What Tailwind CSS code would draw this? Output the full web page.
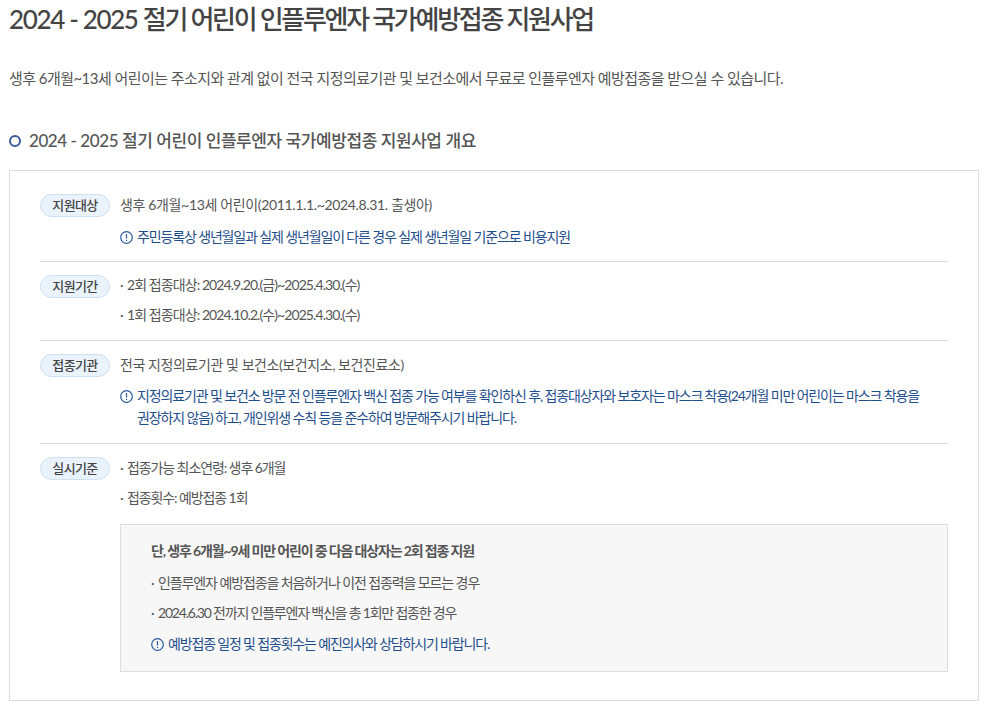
<!DOCTYPE html>
<html lang="ko">
<head>
    <meta charset="UTF-8">
    <title>2024 - 2025 절기 어린이 인플루엔자 국가예방접종 지원사업</title>
    <script src="https://cdn.jsdelivr.net/npm/@tailwindcss/browser@4"></script>
</head>
<body class="bg-white font-['Lato','Noto_Sans_CJK_KR',sans-serif] text-[#555] overflow-hidden">
<div class="h-[709px] pl-[9px] pr-2">
    <h1 class="h-[40px] -mt-[1px] text-[26px] leading-[40px] font-medium tracking-[-2.27px] text-[#444]"><span class="tracking-[-1.35px]">2024 - 2025 </span>절기 어린이 인플루엔자 국가예방접종 지원사업</h1>

    <p class="mt-[27px] text-[15px] leading-[24px] tracking-[-0.55px]">생후 6개월~13세 어린이는 주소지와 관계 없이 전국 지정의료기관 및 보건소에서 무료로 인플루엔자 예방접종을 받으실 수 있습니다.</p>

    <h2 class="mt-[38px] flex items-center h-[26px] text-[17px] font-medium tracking-[-0.43px] text-[#555]">
        <span class="w-[12px] h-[12px] -mt-px rounded-full border-[2.5px] border-[#3b5a9a] mr-2"></span>
        2024 - 2025 절기 어린이 인플루엔자 국가예방접종 지원사업 개요
    </h2>

    <div class="mt-[16px] h-[531px] border border-[#ddd] px-[30px] pt-[23px]">
        <!-- 지원대상 -->
        <div class="flex h-[68px] border-b border-[#ddd]">
            <span class="w-[70px] h-[23px] shrink-0 rounded-full border border-[#cfe0f0] bg-[#eaf3fc] text-[13px] leading-[21px] text-center font-medium text-[#444] tracking-[-0.6px]">지원대상</span>
            <div class="ml-[10px] text-[14px]">
                <p class="leading-[22px] tracking-[-0.35px]">생후 6개월~13세 어린이(2011.1.1.~2024.8.31. 출생아)</p>
                <p class="mt-[10px] leading-[22px] text-[#1f4e8c] flex tracking-[-1.14px]">
                    <svg class="w-[13px] h-[13px] mt-[5px] mr-[4px] shrink-0" viewBox="0 0 13 13" fill="none" stroke="#2a5aa0" stroke-width="1.2"><circle cx="6.5" cy="6.5" r="5.8"/><path d="M6.5 3v4.5M6.5 8.8v1.3"/></svg>
                    주민등록상 생년월일과 실제 생년월일이 다른 경우 실제 생년월일 기준으로 비용지원
                </p>
            </div>
        </div>
        <!-- 지원기간 -->
        <div class="flex h-[79px] pt-[13px] border-b border-[#ddd]">
            <span class="w-[70px] h-[23px] shrink-0 rounded-full border border-[#cfe0f0] bg-[#eaf3fc] text-[13px] leading-[21px] text-center font-medium text-[#444] tracking-[-0.6px]">지원기간</span>
            <ul class="ml-[10px] -mt-px text-[14px] tracking-[-0.92px] leading-[22px] space-y-2">
                <li class="flex"><span class="w-[7px]">·</span>2회 접종대상: 2024.9.20.(금)~2025.4.30.(수)</li>
                <li class="flex"><span class="w-[7px]">·</span>1회 접종대상: 2024.10.2.(수)~2025.4.30.(수)</li>
            </ul>
        </div>
        <!-- 접종기관 -->
        <div class="flex h-[103px] pt-[13px] border-b border-[#ddd]">
            <span class="w-[70px] h-[23px] shrink-0 rounded-full border border-[#cfe0f0] bg-[#eaf3fc] text-[13px] leading-[21px] text-center font-medium text-[#444] tracking-[-0.6px]">접종기관</span>
            <div class="ml-[10px] text-[14px]">
                <p class="leading-[22px] tracking-[-0.42px]">전국 지정의료기관 및 보건소(보건지소, 보건진료소)</p>
                <p class="mt-[9px] leading-[22px] text-[#1f4e8c] flex tracking-[-1.13px]">
                    <svg class="w-[13px] h-[13px] mt-[5px] mr-[4px] shrink-0" viewBox="0 0 13 13" fill="none" stroke="#2a5aa0" stroke-width="1.2"><circle cx="6.5" cy="6.5" r="5.8"/><path d="M6.5 3v4.5M6.5 8.8v1.3"/></svg>
                    <span class="pr-[24px]">지정의료기관 및 보건소 방문 전 인플루엔자 백신 접종 가능 여부를 확인하신 후, 접종대상자와 보호자는 마스크 착용(24개월 미만 어린이는 마스크 착용을 권장하지 않음) 하고, 개인위생 수칙 등을 준수하여 방문해주시기 바랍니다.</span>
                </p>
            </div>
        </div>
        <!-- 실시기준 -->
        <div class="flex pt-[13px]">
            <span class="w-[70px] h-[23px] shrink-0 rounded-full border border-[#cfe0f0] bg-[#eaf3fc] text-[13px] leading-[21px] text-center font-medium text-[#444] tracking-[-0.6px]">실시기준</span>
            <div class="ml-[10px] flex-1 text-[14px] tracking-[-1.1px]">
                <ul class="leading-[22px] space-y-2">
                    <li class="flex"><span class="w-[7px]">·</span>접종가능 최소연령: 생후 6개월</li>
                    <li class="flex"><span class="w-[7px]">·</span>접종횟수: 예방접종 1회</li>
                </ul>
                <div class="mt-[15px] h-[148px] border border-[#ddd] bg-[#f7f7f7] pl-[30px] pt-[15px] leading-[22px]">
                    <p class="font-bold tracking-[-1.13px]">단, 생후 6개월~9세 미만 어린이 중 다음 대상자는 2회 접종 지원</p>
                    <p class="mt-[10px] flex"><span class="w-[7px]">·</span>인플루엔자 예방접종을 처음하거나 이전 접종력을 모르는 경우</p>
                    <p class="mt-2 flex tracking-[-1.2px]"><span class="w-[7px]">·</span>2024.6.30 전까지 인플루엔자 백신을 총 1회만 접종한 경우</p>
                    <p class="mt-[9px] text-[#1f4e8c] flex tracking-[-1.17px]">
                        <svg class="w-[13px] h-[13px] mt-[5px] mr-[4px] shrink-0" viewBox="0 0 13 13" fill="none" stroke="#2a5aa0" stroke-width="1.2"><circle cx="6.5" cy="6.5" r="5.8"/><path d="M6.5 3v4.5M6.5 8.8v1.3"/></svg>
                        예방접종 일정 및 접종횟수는 예진의사와 상담하시기 바랍니다.
                    </p>
                </div>
            </div>
        </div>
    </div>
</div>
</body>
</html>
